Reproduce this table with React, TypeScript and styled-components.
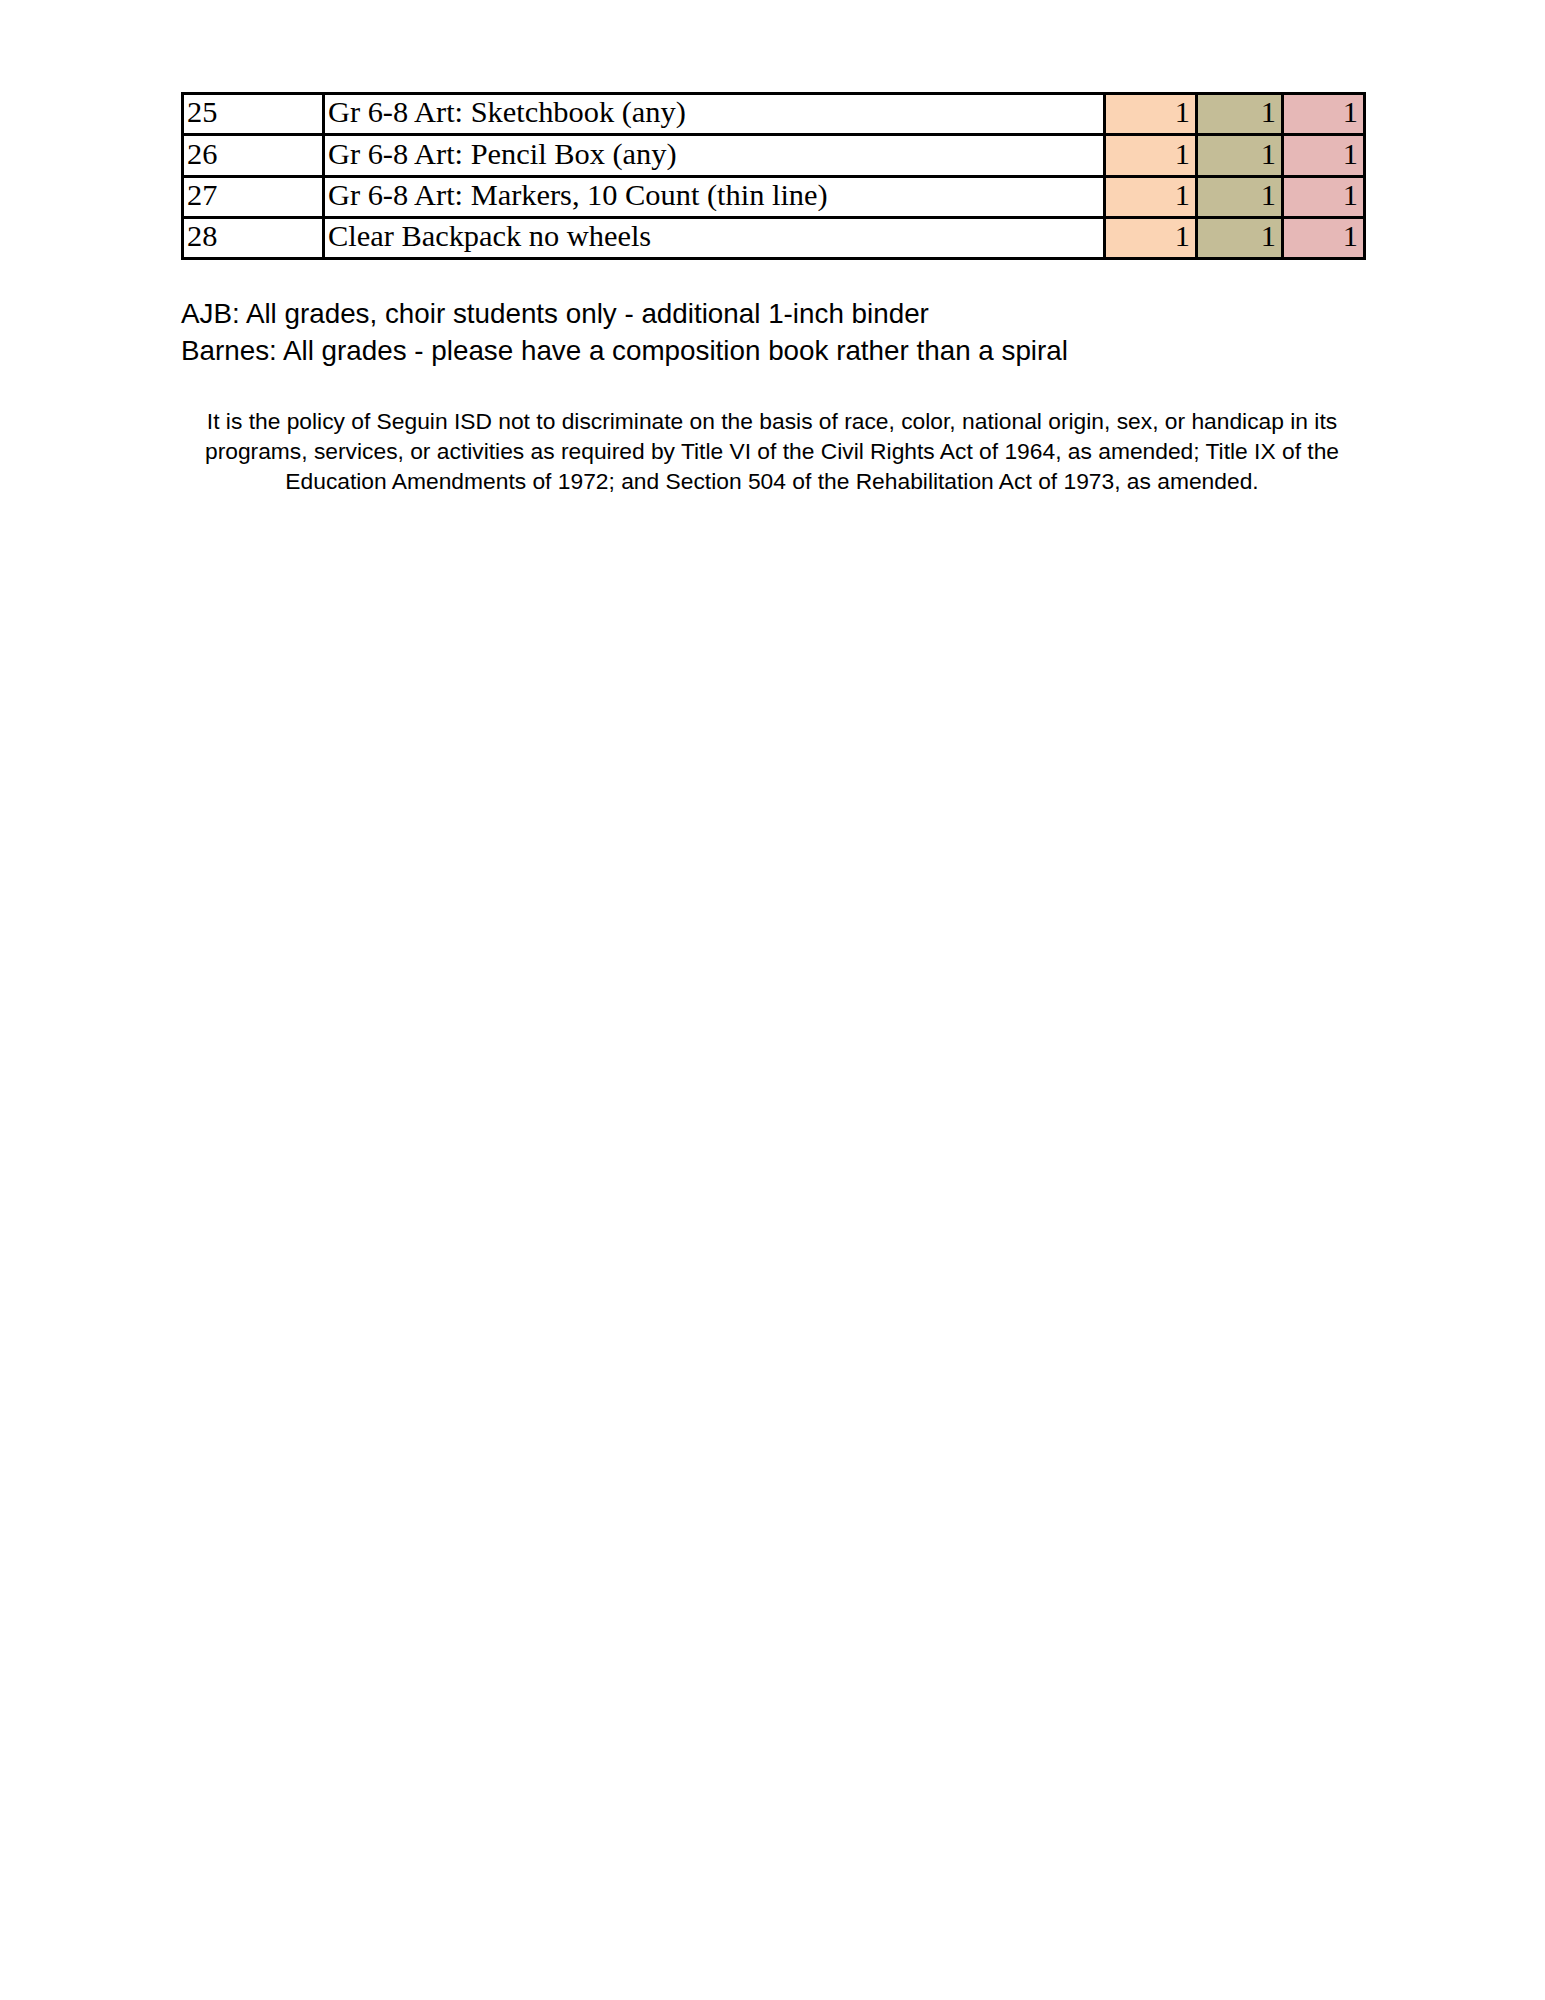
import React from 'react';
import styled, { createGlobalStyle } from 'styled-components';

type Tint = 'none' | 'peach' | 'olive' | 'rose';

interface IRow {
  num: number;
  item: string;
  counts: number[];
}

const tints: Record<Tint, string> = {
  none: '#ffffff',
  peach: '#fbd4b4',
  olive: '#c4bd97',
  rose: '#e6b8b7',
};

const rows: IRow[] = [
  { num: 25, item: 'Gr 6-8 Art: Sketchbook (any)', counts: [1, 1, 1] },
  { num: 26, item: 'Gr 6-8 Art: Pencil Box (any)', counts: [1, 1, 1] },
  { num: 27, item: 'Gr 6-8 Art: Markers, 10 Count (thin line)', counts: [1, 1, 1] },
  { num: 28, item: 'Clear Backpack no wheels', counts: [1, 1, 1] },
];

const countTints: Tint[] = ['peach', 'olive', 'rose'];
const colWidths = [141, 781, 92, 86, 82];

const GlobalStyle = createGlobalStyle`
  html, body {
    margin: 0;
    padding: 0;
    background: #ffffff;
  }

  body {
    width: 1545px;
    min-height: 2000px;
    color: #000000;
    font-family: "Liberation Sans", Arial, sans-serif;
  }
`;

const Page = styled.main`
  display: flex;
  flex-direction: column;
  padding: 92px 0 0 181px;
`;

const Sheet = styled.table`
  border-collapse: collapse;
  table-layout: fixed;
  width: 1182px;
  font-family: "Liberation Serif", "Times New Roman", serif;
  font-size: 30.4px;
`;

const Cell = styled.td<{ $tint: Tint; $right?: boolean }>`
  border: 3px solid #000000;
  background: ${(p) => tints[p.$tint]};
  height: 32.25px;
  padding: 0 ${(p) => (p.$right ? '5px' : '3px')} 6px 3px;
  text-align: ${(p) => (p.$right ? 'right' : 'left')};
  vertical-align: bottom;
  line-height: 30px;
  white-space: nowrap;
`;

const Notes = styled.div`
  margin-top: 36px;
  font-size: 27.8px;
  line-height: 36.7px;
`;

const Policy = styled.p`
  margin: 37px 0 0;
  width: 1182px;
  font-size: 22.8px;
  line-height: 30px;
  text-align: center;
`;

export default function App() {
  return (
    <>
      <GlobalStyle />
      <Page>
        <Sheet>
          <colgroup>
            {colWidths.map((w, i) => (
              <col key={i} style={{ width: w }} />
            ))}
          </colgroup>
          <tbody>
            {rows.map((r) => (
              <tr key={r.num}>
                <Cell $tint="none">{r.num}</Cell>
                <Cell $tint="none">{r.item}</Cell>
                {r.counts.map((c, i) => (
                  <Cell key={i} $tint={countTints[i]} $right>
                    {c}
                  </Cell>
                ))}
              </tr>
            ))}
          </tbody>
        </Sheet>

        <Notes>
          <div>AJB: All grades, choir students only - additional 1-inch binder</div>
          <div>Barnes: All grades - please have a composition book rather than a spiral</div>
        </Notes>

        <Policy>
          It is the policy of Seguin ISD not to discriminate on the basis of race, color, national origin, sex, or handicap in its
          <br />
          programs, services, or activities as required by Title VI of the Civil Rights Act of 1964, as amended; Title IX of the
          <br />
          Education Amendments of 1972; and Section 504 of the Rehabilitation Act of 1973, as amended.
        </Policy>
      </Page>
    </>
  );
}
